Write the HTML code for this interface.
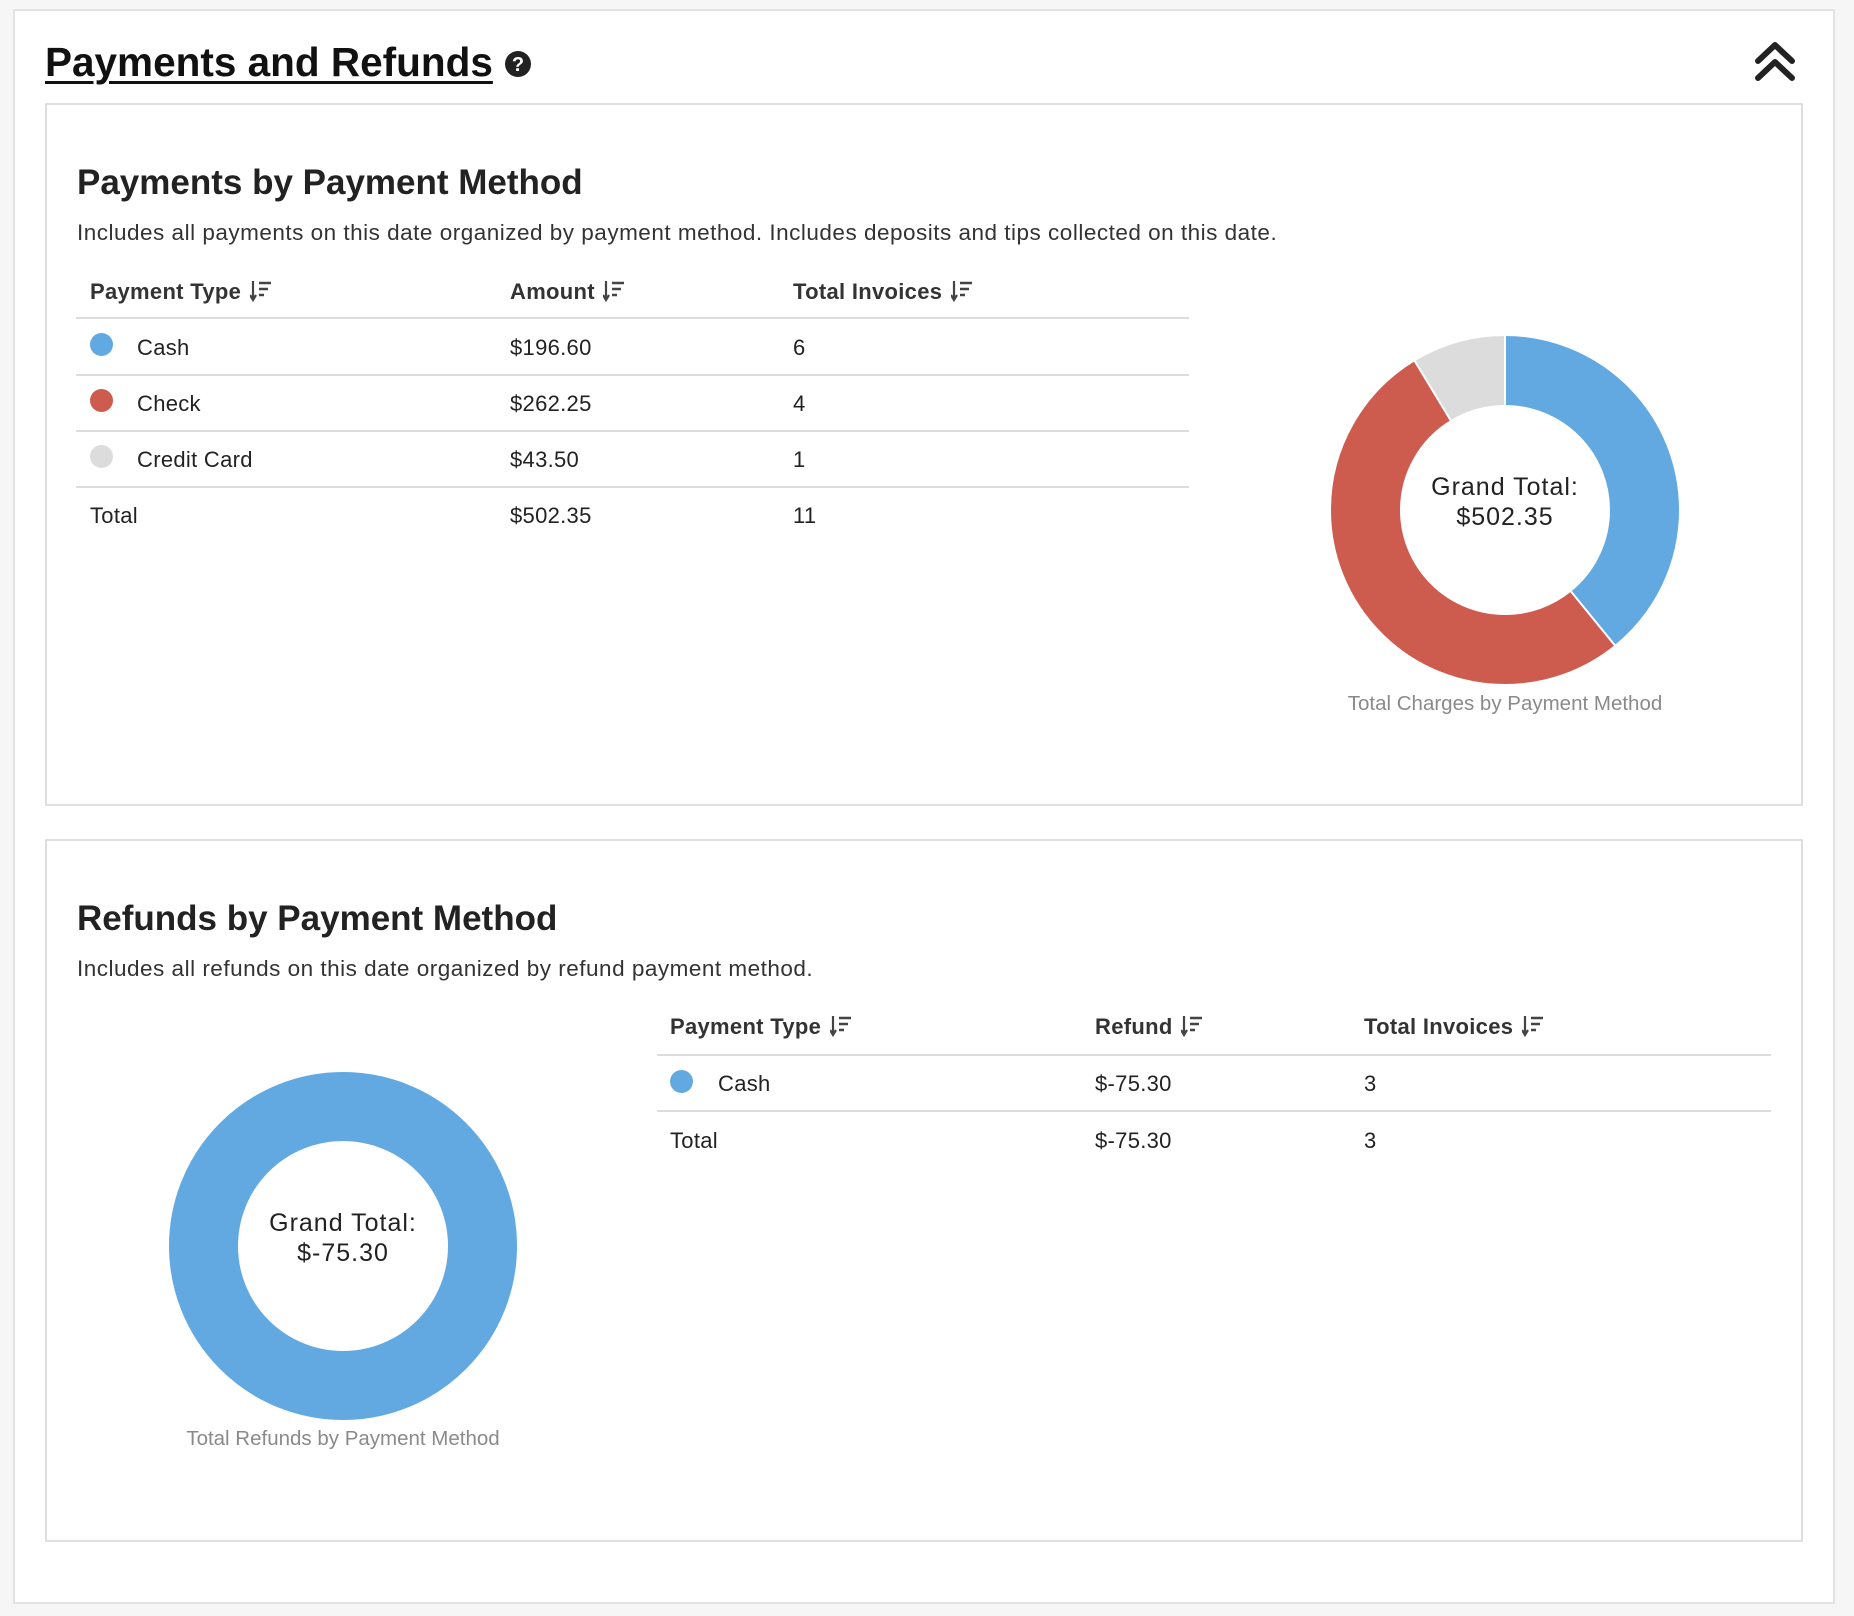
<!DOCTYPE html>
<html><head><meta charset="utf-8"><style>
*{margin:0;padding:0;box-sizing:border-box}
body{width:1854px;height:1616px;background:#f6f6f6;font-family:"Liberation Sans",Arial,sans-serif;color:#222;position:relative;overflow:hidden}
.abs{position:absolute;white-space:nowrap}
.outer{position:absolute;left:13px;top:9px;width:1822px;height:1595px;background:#fff;border:2px solid #e2e2e2}
.panel{position:absolute;left:45px;width:1758px;background:#fff;border:2px solid #dedede}
h1{position:absolute;left:45px;top:39px;font-size:40.5px;font-weight:bold;text-decoration:underline;text-decoration-thickness:3px;text-underline-offset:5px;color:#111;white-space:nowrap}
.h2{font-size:35px;font-weight:bold;color:#222}
.desc{font-size:22.5px;color:#333;letter-spacing:0.5px}
.th{font-size:22px;font-weight:bold;color:#333;letter-spacing:0.3px}
.th svg{margin-left:2px}
.td{font-size:22px;color:#222;letter-spacing:0.3px}
.line{position:absolute;height:2px;background:#dcdcdc}
.dot{position:absolute;width:23px;height:23px;border-radius:50%}
.cap{font-size:20.5px;color:#8a8a8a}
.gt{font-size:25px;color:#222;text-align:center;line-height:30px;letter-spacing:1px}
</style></head><body>
<div class="outer"></div>
<h1>Payments and Refunds</h1>
<svg class="abs" style="left:504px;top:50px" width="28" height="28" viewBox="0 0 28 28"><circle cx="14" cy="14" r="13" fill="#222"/><text x="14" y="21" text-anchor="middle" font-family="Liberation Sans" font-weight="bold" font-size="20" fill="#fff">?</text></svg>
<svg class="abs" style="left:1752px;top:38px" width="46" height="46" viewBox="0 0 46 46"><path d="M6 23 L23 7 L40 23 M6 40 L23 24 L40 40" fill="none" stroke="#222" stroke-width="6" stroke-linecap="round" stroke-linejoin="round"/></svg>

<div class="panel" style="top:103px;height:703px"></div>
<div class="abs h2" style="left:77px;top:163px">Payments by Payment Method</div>
<div class="abs desc" style="left:77px;top:220px">Includes all payments on this date organized by payment method. Includes deposits and tips collected on this date.</div>

<div class="abs th" style="left:90px;top:279px">Payment Type <svg width="24" height="22" viewBox="0 0 24 22" style="vertical-align:-3px"><path d="M3 1V19M0 15L3 20L6 15" fill="none" stroke="#444" stroke-width="2.2"/><path d="M9 3H21M9 9H18M9 15H14" stroke="#444" stroke-width="2.5"/></svg></div>
<div class="abs th" style="left:510px;top:279px">Amount <svg width="24" height="22" viewBox="0 0 24 22" style="vertical-align:-3px"><path d="M3 1V19M0 15L3 20L6 15" fill="none" stroke="#444" stroke-width="2.2"/><path d="M9 3H21M9 9H18M9 15H14" stroke="#444" stroke-width="2.5"/></svg></div>
<div class="abs th" style="left:793px;top:279px">Total Invoices <svg width="24" height="22" viewBox="0 0 24 22" style="vertical-align:-3px"><path d="M3 1V19M0 15L3 20L6 15" fill="none" stroke="#444" stroke-width="2.2"/><path d="M9 3H21M9 9H18M9 15H14" stroke="#444" stroke-width="2.5"/></svg></div>
<div class="line" style="left:76px;top:317px;width:1113px"></div>
<div class="line" style="left:76px;top:374px;width:1113px"></div>
<div class="line" style="left:76px;top:430px;width:1113px"></div>
<div class="line" style="left:76px;top:486px;width:1113px"></div>

<div class="dot" style="left:90px;top:333px;background:#62a9e2"></div>
<div class="abs td" style="left:137px;top:335px">Cash</div><div class="abs td" style="left:510px;top:335px">$196.60</div><div class="abs td" style="left:793px;top:335px">6</div>
<div class="dot" style="left:90px;top:389px;background:#cd5c4f"></div>
<div class="abs td" style="left:137px;top:391px">Check</div><div class="abs td" style="left:510px;top:391px">$262.25</div><div class="abs td" style="left:793px;top:391px">4</div>
<div class="dot" style="left:90px;top:445px;background:#dcdcdc"></div>
<div class="abs td" style="left:137px;top:447px">Credit Card</div><div class="abs td" style="left:510px;top:447px">$43.50</div><div class="abs td" style="left:793px;top:447px">1</div>
<div class="abs td" style="left:90px;top:503px">Total</div><div class="abs td" style="left:510px;top:503px">$502.35</div><div class="abs td" style="left:793px;top:503px">11</div>

<svg class="abs" style="left:1325px;top:330px" width="360" height="360" viewBox="-180 -180 360 360">
<g transform="rotate(-90)" fill="none" stroke-width="69">
<circle r="139.5" stroke="#62a9e2" stroke-dasharray="343 534" stroke-dashoffset="0"/>
<circle r="139.5" stroke="#cd5c4f" stroke-dasharray="457.6 419" stroke-dashoffset="-343"/>
<circle r="139.5" stroke="#dcdcdc" stroke-dasharray="75.9 801" stroke-dashoffset="-800.6"/>
</g>
<g stroke="#fff" stroke-width="2"><line x1="0" y1="-104" x2="0" y2="-175"/><line x1="66" y1="81.5" x2="110" y2="135.5"/><line x1="-54.4" y1="-89.8" x2="-90.4" y2="-149.2"/></g>
</svg>
<div class="abs gt" style="left:1405px;top:472px;width:200px">Grand Total:<br>$502.35</div>
<div class="abs cap" style="left:1305px;top:692px;width:400px;text-align:center">Total Charges by Payment Method</div>

<div class="panel" style="top:839px;height:703px"></div>
<div class="abs h2" style="left:77px;top:899px">Refunds by Payment Method</div>
<div class="abs desc" style="left:77px;top:956px">Includes all refunds on this date organized by refund payment method.</div>

<div class="abs th" style="left:670px;top:1014px">Payment Type <svg width="24" height="22" viewBox="0 0 24 22" style="vertical-align:-3px"><path d="M3 1V19M0 15L3 20L6 15" fill="none" stroke="#444" stroke-width="2.2"/><path d="M9 3H21M9 9H18M9 15H14" stroke="#444" stroke-width="2.5"/></svg></div>
<div class="abs th" style="left:1095px;top:1014px">Refund <svg width="24" height="22" viewBox="0 0 24 22" style="vertical-align:-3px"><path d="M3 1V19M0 15L3 20L6 15" fill="none" stroke="#444" stroke-width="2.2"/><path d="M9 3H21M9 9H18M9 15H14" stroke="#444" stroke-width="2.5"/></svg></div>
<div class="abs th" style="left:1364px;top:1014px">Total Invoices <svg width="24" height="22" viewBox="0 0 24 22" style="vertical-align:-3px"><path d="M3 1V19M0 15L3 20L6 15" fill="none" stroke="#444" stroke-width="2.2"/><path d="M9 3H21M9 9H18M9 15H14" stroke="#444" stroke-width="2.5"/></svg></div>
<div class="line" style="left:657px;top:1054px;width:1114px"></div>
<div class="line" style="left:657px;top:1110px;width:1114px"></div>
<div class="dot" style="left:670px;top:1070px;background:#62a9e2"></div>
<div class="abs td" style="left:718px;top:1071px">Cash</div><div class="abs td" style="left:1095px;top:1071px">$-75.30</div><div class="abs td" style="left:1364px;top:1071px">3</div>
<div class="abs td" style="left:670px;top:1128px">Total</div><div class="abs td" style="left:1095px;top:1128px">$-75.30</div><div class="abs td" style="left:1364px;top:1128px">3</div>

<svg class="abs" style="left:163px;top:1066px" width="360" height="360" viewBox="-180 -180 360 360">
<circle r="139.5" fill="none" stroke="#62a9e2" stroke-width="69"/>
</svg>
<div class="abs gt" style="left:243px;top:1208px;width:200px">Grand Total:<br>$-75.30</div>
<div class="abs cap" style="left:143px;top:1427px;width:400px;text-align:center">Total Refunds by Payment Method</div>
</body></html>
